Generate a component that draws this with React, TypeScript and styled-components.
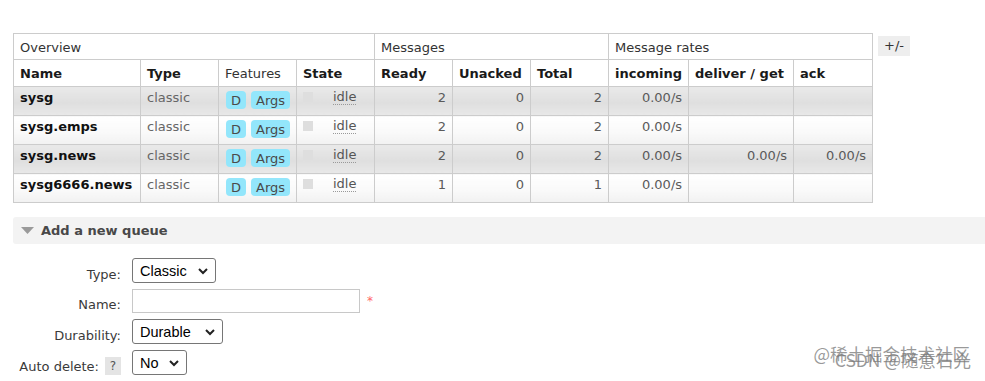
import React from 'react';
import styled, { createGlobalStyle } from 'styled-components';

// Estilos globales: fuente tipo Verdana y sin scroll
const GlobalStyle = createGlobalStyle`
  html, body {
    margin: 0;
    padding: 0;
    overflow: hidden;
    background: #fff;
  }
  body {
    font-family: "DejaVu Sans", Verdana, sans-serif;
    font-size: 13px;
    color: #484848;
  }
`;

const Page = styled.div`
  position: relative;
  height: 381px;
  box-sizing: border-box;
  padding: 33px 0 0 13px;
  overflow: hidden;
`;

const TableWrap = styled.div`
  display: flex;
  align-items: flex-start;
  gap: 5px;
`;

const List = styled.table`
  border-collapse: collapse;
  table-layout: fixed;
  width: 860px;

  th,
  td {
    border: 1px solid #ccc;
    line-height: 17px;
    text-align: left;
    vertical-align: top;
    white-space: nowrap;
    overflow: hidden;
  }
`;

const Col = styled.col<{ $w: number }>`
  width: ${(p) => p.$w}px;
`;

const GroupTh = styled.th`
  padding: 5px 6px 3px;
  font-weight: normal;
  color: #333;
  background: #fff;
`;

const Th = styled.th<{ $plain?: boolean }>`
  padding: 5px 6px 4px;
  font-weight: ${(p) => (p.$plain ? 'normal' : 'bold')};
  color: ${(p) => (p.$plain ? '#333' : '#1a1a1a')};
  background: #fff;
`;

const Row = styled.tr<{ $alt: boolean }>`
  td {
    padding: 2px 6px;
    background: ${(p) =>
      p.$alt
        ? 'linear-gradient(#e9e9e9, #dfdfdf 55%, #e8e8e8)'
        : 'linear-gradient(#ffffff, #f9f9f9 60%, #f1f1f1)'};
  }
`;

const NameCell = styled.td`
  font-weight: bold;
  color: #111;
`;

const TypeCell = styled.td`
  color: #666;
`;

const NumCell = styled.td`
  && {
    text-align: right;
  }
  color: #5a5a5a;
`;

const Badges = styled.div`
  display: flex;
  align-items: flex-start;
  gap: 5px;
  height: 24px;
  padding-left: 1px;
`;

const Badge = styled.span`
  margin-top: 2px;
  height: 18px;
  line-height: 19px;
  padding: 0 5px;
  border-radius: 4px;
  background: #93e6fb;
  color: #4a4a4a;
`;

const StateBox = styled.div`
  display: flex;
  align-items: flex-start;
`;

const StateKey = styled.span`
  width: 10px;
  height: 10px;
  margin-top: 3px;
  margin-right: 20px;
  background: #dedede;
`;

const Abbr = styled.span`
  display: inline-block;
  line-height: 15px;
  color: #555;
  border-bottom: 1px dotted #999;
`;

const PlusMinus = styled.div`
  margin-top: 3px;
  width: 32px;
  height: 20px;
  line-height: 20px;
  text-align: center;
  background: #eeeeee;
  color: #333;
`;

const SectionHead = styled.h2`
  margin: 14px 0 0;
  height: 27px;
  display: flex;
  align-items: center;
  gap: 7px;
  padding-left: 8px;
  background: #f3f3f3;
  border-radius: 3px 0 0 3px;
  font-size: 13px;
  font-weight: bold;
  color: #484848;
`;

const Form = styled.div`
  display: grid;
  grid-template-columns: 108px auto;
  column-gap: 11px;
  row-gap: 6px;
  margin-top: 14px;
  align-items: end;
  justify-items: start;
`;

const Label = styled.div`
  justify-self: end;
  display: flex;
  align-items: flex-end;
  gap: 6px;
  line-height: 17px;
  color: #3a3a3a;
`;

const Help = styled.span`
  width: 16px;
  height: 18px;
  line-height: 18px;
  text-align: center;
  font-size: 12px;
  background: #e4e4e4;
  color: #555;
`;

const Controls = styled.div`
  display: flex;
  align-items: flex-start;
`;

const SelectWrap = styled.span<{ $gap?: number }>`
  position: relative;
  display: inline-block;
  margin-left: ${(p) => p.$gap ?? 0}px;
`;

const Select = styled.select<{ $w: number }>`
  appearance: none;
  width: ${(p) => p.$w}px;
  height: 25px;
  box-sizing: border-box;
  margin: 0;
  padding: 0 0 0 7px;
  border: 1px solid #767676;
  border-radius: 3px;
  background: #fff;
  color: #000;
  font-family: "Liberation Sans", Arial, sans-serif;
  font-size: 14.5px;
`;

const Chevron = styled.svg`
  position: absolute;
  right: 8px;
  top: 10px;
  pointer-events: none;
`;

const TextInput = styled.input<{ $w: number; $gap?: number }>`
  width: ${(p) => p.$w}px;
  height: 24px;
  box-sizing: border-box;
  margin: 0 0 0 ${(p) => p.$gap ?? 0}px;
  padding: 2px 4px;
  border: 1px solid #c8c8c8;
  background: #fff;
`;

const Required = styled.span`
  margin: 5px 0 0 7px;
  font-size: 12px;
  line-height: 14px;
  color: #f66;
`;

const Watermark = styled.div<{ $top: number; $right: number }>`
  position: absolute;
  top: ${(p) => p.$top}px;
  right: ${(p) => p.$right}px;
  font-family: "Noto Sans CJK SC", "Liberation Sans", sans-serif;
  font-size: 17.5px;
  line-height: 20px;
  color: rgba(120, 120, 120, 0.75);
  white-space: nowrap;
`;

const colWidths = [127, 78, 78, 78, 78, 78, 78, 80, 105, 79];

const queues = [
  { name: 'sysg', ready: 2, unacked: 0, total: 2, incoming: '0.00/s', deliver: '', ack: '' },
  { name: 'sysg.emps', ready: 2, unacked: 0, total: 2, incoming: '0.00/s', deliver: '', ack: '' },
  { name: 'sysg.news', ready: 2, unacked: 0, total: 2, incoming: '0.00/s', deliver: '0.00/s', ack: '0.00/s' },
  { name: 'sysg6666.news', ready: 1, unacked: 0, total: 1, incoming: '0.00/s', deliver: '', ack: '' },
];

const Dropdown: React.FC<{ width: number; value: string; options: string[]; gap?: number }> = ({
  width,
  value,
  options,
  gap,
}) => (
  <SelectWrap $gap={gap}>
    <Select $w={width} defaultValue={value}>
      {options.map((o) => (
        <option key={o}>{o}</option>
      ))}
    </Select>
    <Chevron width="10" height="7" viewBox="0 0 10 7">
      <polyline points="1,1 5,5 9,1" fill="none" stroke="#222" strokeWidth="2" />
    </Chevron>
  </SelectWrap>
);

const App: React.FC = () => {
  return (
    <Page>
      <GlobalStyle />

      {/* Tabla de colas */}
      <TableWrap>
        <List>
          <colgroup>
            {colWidths.map((w, i) => (
              <Col key={i} $w={w} />
            ))}
          </colgroup>
          <thead>
            <tr>
              <GroupTh colSpan={4}>Overview</GroupTh>
              <GroupTh colSpan={3}>Messages</GroupTh>
              <GroupTh colSpan={3}>Message rates</GroupTh>
            </tr>
            <tr>
              <Th>Name</Th>
              <Th>Type</Th>
              <Th $plain>Features</Th>
              <Th>State</Th>
              <Th>Ready</Th>
              <Th>Unacked</Th>
              <Th>Total</Th>
              <Th>incoming</Th>
              <Th>deliver / get</Th>
              <Th>ack</Th>
            </tr>
          </thead>
          <tbody>
            {queues.map((q, i) => (
              <Row key={q.name} $alt={i % 2 === 0}>
                <NameCell>{q.name}</NameCell>
                <TypeCell>classic</TypeCell>
                <td>
                  <Badges>
                    <Badge>D</Badge>
                    <Badge>Args</Badge>
                  </Badges>
                </td>
                <td>
                  <StateBox>
                    <StateKey />
                    <Abbr>idle</Abbr>
                  </StateBox>
                </td>
                <NumCell>{q.ready}</NumCell>
                <NumCell>{q.unacked}</NumCell>
                <NumCell>{q.total}</NumCell>
                <NumCell>{q.incoming}</NumCell>
                <NumCell>{q.deliver}</NumCell>
                <NumCell>{q.ack}</NumCell>
              </Row>
            ))}
          </tbody>
        </List>
        <PlusMinus>+/-</PlusMinus>
      </TableWrap>

      {/* Sección para agregar una cola */}
      <SectionHead>
        <svg width="13" height="7" viewBox="0 0 13 7">
          <polygon points="0,0 13,0 6.5,7" fill="#9a9a9a" />
        </svg>
        Add a new queue
      </SectionHead>

      <Form>
        <Label>Type:</Label>
        <Controls>
          <Dropdown width={84} value="Classic" options={['Classic', 'Quorum', 'Stream']} />
        </Controls>

        <Label>Name:</Label>
        <Controls>
          <TextInput $w={228} type="text" />
          <Required>*</Required>
        </Controls>

        <Label>Durability:</Label>
        <Controls>
          <Dropdown width={91} value="Durable" options={['Durable', 'Transient']} />
        </Controls>

        <Label>
          Auto delete:
          <Help>?</Help>
        </Label>
        <Controls>
          <Dropdown width={55} value="No" options={['No', 'Yes']} />
        </Controls>

        {/* Fila de argumentos, solo asoma su borde superior */}
        <Label />
        <Controls>
          <TextInput $w={228} type="text" />
          <TextInput $w={229} $gap={16} type="text" />
          <Dropdown width={84} gap={6} value="String" options={['String', 'Number', 'Boolean', 'List']} />
        </Controls>
      </Form>

      <Watermark $top={344} $right={15}>@稀土掘金技术社区</Watermark>
      <Watermark $top={350} $right={14}>CSDN @随意石光</Watermark>
    </Page>
  );
};

export default App;
